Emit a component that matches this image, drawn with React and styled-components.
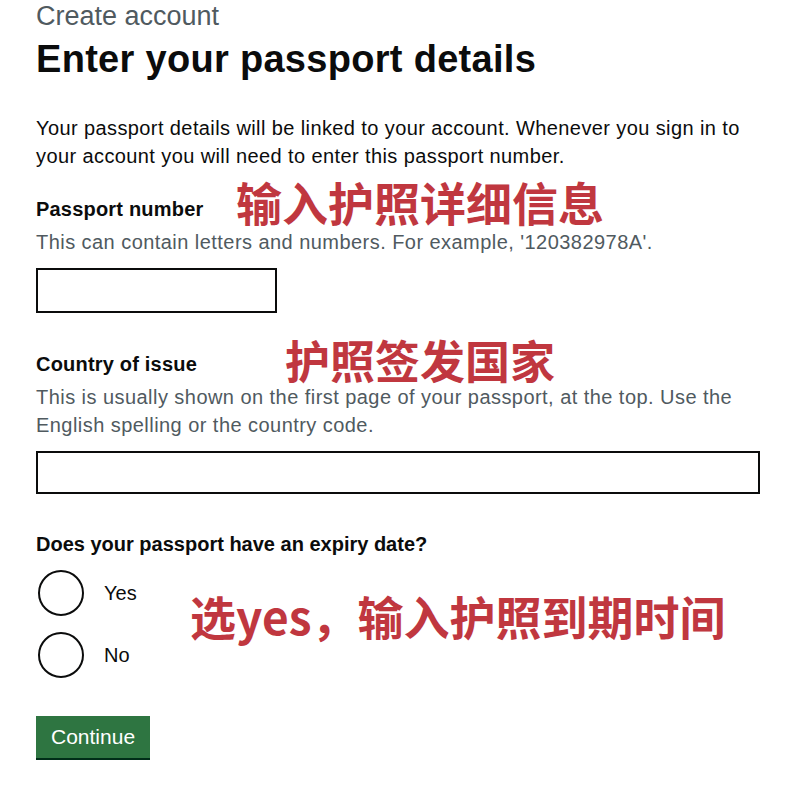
import React from 'react'
import styled, { createGlobalStyle } from 'styled-components'

const GlobalStyle = createGlobalStyle`
  html, body {
    margin: 0;
    padding: 0;
    background: #ffffff;
  }
  body {
    font-family: "Liberation Sans", Arial, sans-serif;
    color: #0b0c0c;
  }
`

const Page = styled.main`
  position: relative;
  width: 800px;
  height: 788px;
  box-sizing: border-box;
  padding: 0 36px;
  overflow: hidden;
`

const Caption = styled.span`
  display: block;
  font-size: 27px;
  line-height: 32px;
  color: #505a5f;
`

const Heading = styled.h1`
  margin: 4px 0 0;
  font-size: 38px;
  line-height: 46px;
  font-weight: 700;
  letter-spacing: 0.3px;
`

const Body = styled.p`
  margin: 32px 0 0;
  font-size: 20px;
  line-height: 28px;
  letter-spacing: 0.4px;
`

const Group = styled.div`
  margin-top: ${(p) => p.$gap || 37}px;
`

const Label = styled.label`
  display: block;
  font-size: 20px;
  line-height: 28px;
  font-weight: 700;
  letter-spacing: 0.2px;
`

const Hint = styled.div`
  margin-top: 5px;
  font-size: 20px;
  line-height: 28px;
  color: #505a5f;
  letter-spacing: 0.45px;
`

const TextInput = styled.input`
  display: block;
  box-sizing: border-box;
  margin-top: 12px;
  width: ${(p) => p.$width}px;
  height: ${(p) => p.$height || 45}px;
  border: 2px solid #0b0c0c;
  border-radius: 0;
  padding: 5px;
  font: inherit;
  font-size: 20px;
  background: #ffffff;
`

const Fieldset = styled.fieldset`
  margin: 36px 0 0;
  padding: 0;
  border: 0;
`

const Legend = styled.legend`
  padding: 0;
  font-size: 20px;
  line-height: 28px;
  font-weight: 700;
`

const RadioList = styled.div`
  display: flex;
  flex-direction: column;
  gap: 16px;
  margin-top: 12px;
`

const RadioItem = styled.label`
  display: flex;
  align-items: center;
  gap: 20px;
  padding-left: 2px;
  font-size: 20px;
  line-height: 28px;
`

const Circle = styled.span`
  display: block;
  box-sizing: border-box;
  width: 46px;
  height: 46px;
  border: 2px solid #0b0c0c;
  border-radius: 50%;
  background: #ffffff;
`

const Button = styled.button`
  display: block;
  margin-top: 38px;
  height: 42px;
  padding: 0 15px;
  border: 0;
  border-radius: 0;
  background: #2e7541;
  box-shadow: 0 2px 0 #002d18;
  color: #ffffff;
  font-family: inherit;
  font-size: 21px;
  line-height: 42px;
`

const Note = styled.div`
  position: absolute;
  left: ${(p) => p.$left}px;
  top: ${(p) => p.$top}px;
  font-family: "Noto Sans CJK SC", "Noto Sans", sans-serif;
  font-size: ${(p) => p.$size}px;
  line-height: 1;
  font-weight: 700;
  color: #c0373f;
  white-space: nowrap;
`

const Radio = ({ children }) => (
  <RadioItem>
    <Circle />
    {children}
  </RadioItem>
)

export default function App() {
  return (
    <>
      <GlobalStyle />
      <Page>
        <Caption>Create account</Caption>
        <Heading>Enter your passport details</Heading>
        <Body>
          Your passport details will be linked to your account. Whenever you sign in to
          your account you will need to enter this passport number.
        </Body>

        <Group $gap={25}>
          <Label>Passport number</Label>
          <Hint>This can contain letters and numbers. For example, '120382978A'.</Hint>
          <TextInput $width={241} />
        </Group>

        <Group>
          <Label>Country of issue</Label>
          <Hint>
            This is usually shown on the first page of your passport, at the top. Use the
            English spelling or the country code.
          </Hint>
          <TextInput $width={724} $height={43} />
        </Group>

        <Fieldset>
          <Legend>Does your passport have an expiry date?</Legend>
          <RadioList>
            <Radio>Yes</Radio>
            <Radio>No</Radio>
          </RadioList>
        </Fieldset>

        <Button>Continue</Button>

        <Note $left={236} $top={178} $size={46}>输入护照详细信息</Note>
        <Note $left={285} $top={337} $size={45}>护照签发国家</Note>
        <Note $left={190} $top={592} $size={46}>选yes，输入护照到期时间</Note>
      </Page>
    </>
  )
}
